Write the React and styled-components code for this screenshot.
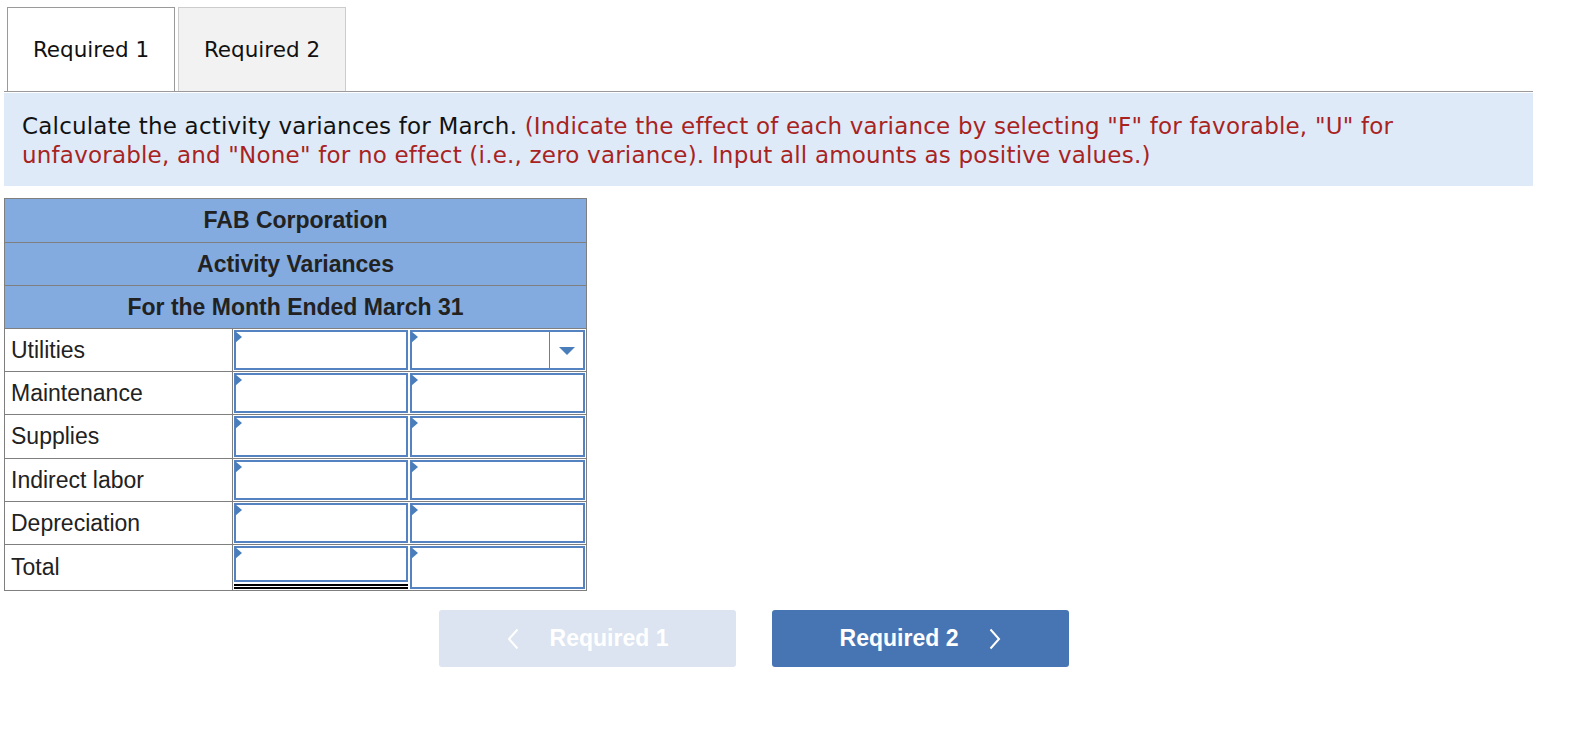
import styled, { createGlobalStyle } from "styled-components";

const GlobalStyle = createGlobalStyle`
  body {
    margin: 0;
    background: #fff;
  }
`;

const Page = styled.div`
  width: 1529px;
  padding: 7px 0 0 4px;
`;

const TabRow = styled.div`
  display: flex;
  gap: 3px;
  padding-left: 3px;
  border-bottom: 1px solid #9a9a9a;
`;

const Tab = styled.div`
  width: 166px;
  height: 83px;
  display: flex;
  align-items: center;
  justify-content: center;
  box-sizing: content-box;
  border: 1px solid ${(p) => (p.$active ? "#9a9a9a" : "#cccccc")};
  border-bottom: none;
  background: ${(p) => (p.$active ? "#ffffff" : "#f2f2f2")};
  font-family: "DejaVu Sans", Verdana, sans-serif;
  font-size: 21.5px;
  color: #111;
`;

const Instructions = styled.div`
  margin-top: 1px;
  background: #deeaf7;
  padding: 19px 18px 16px;
  font-family: "DejaVu Sans", Verdana, sans-serif;
  font-size: 23px;
  letter-spacing: 0.2px;
  line-height: 29px;
  color: #111;
`;

const Hint = styled.span`
  color: #a8231f;
`;

const Sheet = styled.div`
  margin-top: 12px;
  width: 581px;
  border: 1px solid #7f7f7f;
  font-family: "Liberation Sans", Arial, sans-serif;
  font-size: 23px;
  color: #222;
`;

const HeaderRow = styled.div`
  height: 42px;
  display: flex;
  align-items: center;
  justify-content: center;
  background: #83abe0;
  border-bottom: 1px solid #7f7f7f;
  font-weight: bold;
  &:first-child {
    height: 43px;
  }
`;

const Row = styled.div`
  display: grid;
  grid-template-columns: 228px 176px 1fr;
  height: ${(p) => p.$height}px;
  border-bottom: ${(p) => (p.$last ? "none" : "1px solid #7f7f7f")};
`;

const Label = styled.div`
  display: flex;
  align-items: center;
  padding-left: 6px;
  border-right: 1px solid #7f7f7f;
`;

const InputCell = styled.div`
  padding: 1px;
  display: flex;
  flex-direction: column;
`;

const Field = styled.div`
  position: relative;
  flex: 1;
  display: flex;
  justify-content: flex-end;
  background: #fff;
  border: 2px solid #5582c0;
`;

const DoubleRule = styled.div`
  margin-top: 2px;
  height: 1px;
  border-top: 2px solid #000;
  border-bottom: 2px solid #000;
`;

const Marker = styled.span`
  position: absolute;
  top: -1px;
  left: -1px;
  width: 0;
  height: 0;
  border-top: 6px solid transparent;
  border-bottom: 6px solid transparent;
  border-left: 7px solid #4a7ebb;
`;

const DropButton = styled.div`
  width: 33px;
  display: flex;
  align-items: center;
  justify-content: center;
  border-left: 1px solid #5582c0;
`;

const Caret = styled.span`
  width: 0;
  height: 0;
  margin-top: 1px;
  border-left: 8px solid transparent;
  border-right: 8px solid transparent;
  border-top: 8px solid #4a7ebb;
`;

const NavRow = styled.div`
  display: flex;
  gap: 36px;
  margin-top: 19px;
  padding-left: 435px;
`;

const NavButton = styled.div`
  width: 297px;
  height: 57px;
  border-radius: 3px;
  display: flex;
  align-items: center;
  justify-content: center;
  gap: 31px;
  background: ${(p) => (p.$disabled ? "#dbe4f0" : "#4775b4")};
  color: #fff;
  font-family: "Liberation Sans", Arial, sans-serif;
  font-weight: bold;
  font-size: 23px;
`;

const Chevron = ({ dir }) => (
  <svg width="12" height="22" viewBox="0 0 12 22">
    <polyline
      points={dir === "left" ? "10.5,1.5 2,11 10.5,20.5" : "1.5,1.5 10,11 1.5,20.5"}
      fill="none"
      stroke="#fff"
      strokeWidth="2"
    />
  </svg>
);

const rows = [
  { name: "Utilities", height: 42 },
  { name: "Maintenance", height: 42 },
  { name: "Supplies", height: 43 },
  { name: "Indirect labor", height: 42 },
  { name: "Depreciation", height: 42 },
  { name: "Total", height: 45 },
];

const App = () => {
  return (
    <Page>
      <GlobalStyle />
      <TabRow>
        <Tab $active>Required 1</Tab>
        <Tab>Required 2</Tab>
      </TabRow>
      <Instructions>
        Calculate the activity variances for March.{" "}
        <Hint>
          (Indicate the effect of each variance by selecting "F" for favorable, "U" for
          unfavorable, and "None" for no effect (i.e., zero variance). Input all amounts as
          positive values.)
        </Hint>
      </Instructions>
      <Sheet>
        <HeaderRow>FAB Corporation</HeaderRow>
        <HeaderRow>Activity Variances</HeaderRow>
        <HeaderRow>For the Month Ended March 31</HeaderRow>
        {rows.map(({ name, height }, i) => {
          const total = name === "Total";
          return (
            <Row key={name} $height={height} $last={total}>
              <Label>{name}</Label>
              <InputCell>
                <Field>
                  <Marker />
                </Field>
                {total && <DoubleRule />}
              </InputCell>
              <InputCell>
                <Field>
                  <Marker />
                  {i === 0 && (
                    <DropButton>
                      <Caret />
                    </DropButton>
                  )}
                </Field>
              </InputCell>
            </Row>
          );
        })}
      </Sheet>
      <NavRow>
        <NavButton $disabled>
          <Chevron dir="left" />
          Required 1
        </NavButton>
        <NavButton>
          Required 2
          <Chevron dir="right" />
        </NavButton>
      </NavRow>
    </Page>
  );
};

export default App;
